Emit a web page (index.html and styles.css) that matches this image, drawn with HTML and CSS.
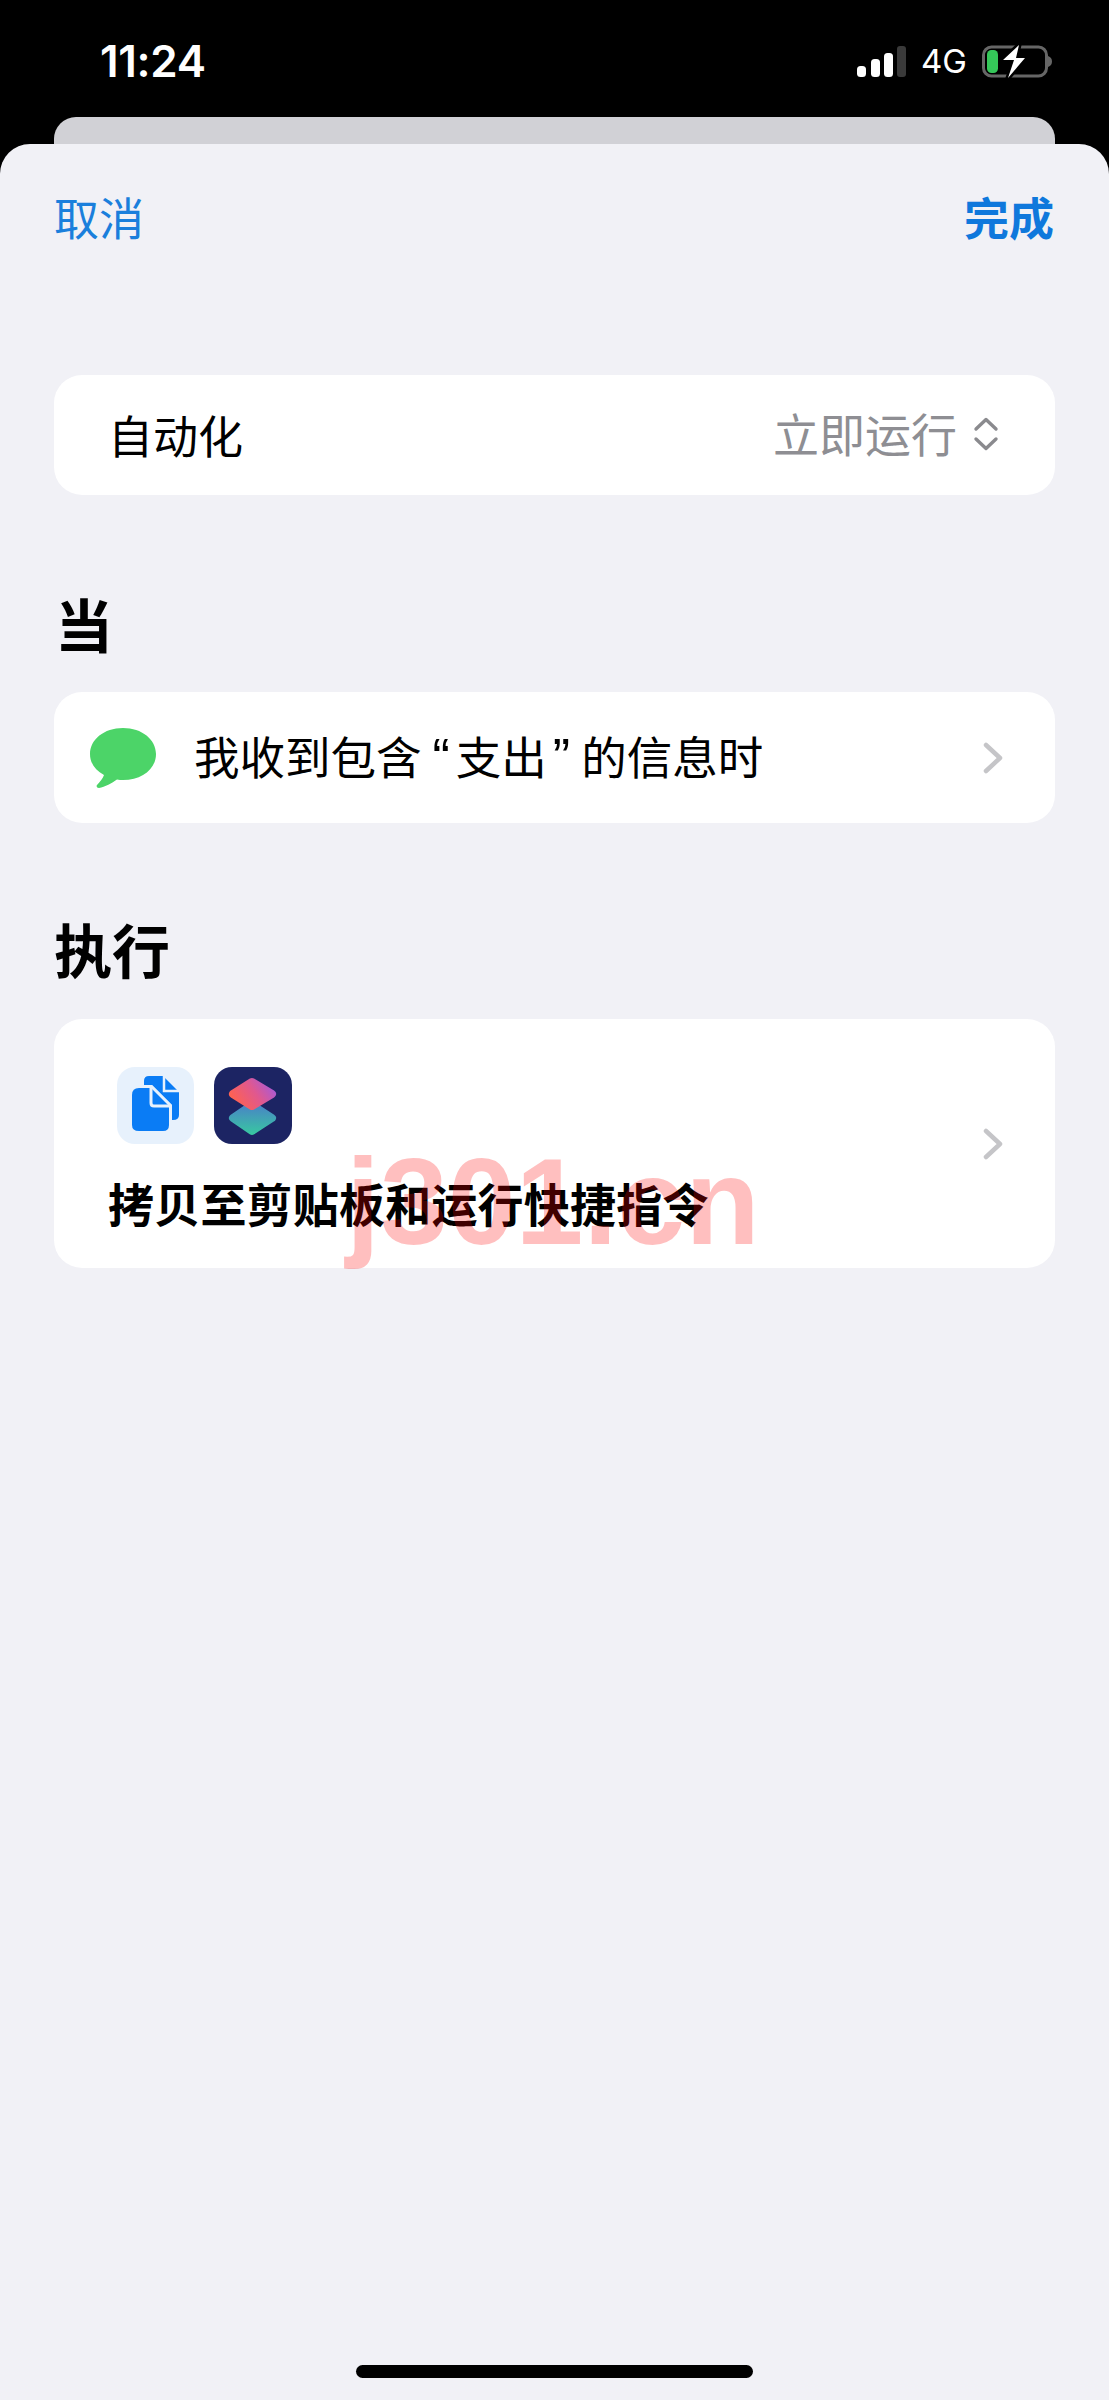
FILE: index.html
```html
<!DOCTYPE html>
<html lang="zh-CN">
<head>
    <meta charset="UTF-8">
    <meta name="viewport" content="width=device-width, initial-scale=1.0">
    <title>自动化</title>
    <link rel="stylesheet" href="styles.css">
</head>
<body>
    <div class="status-bar">
        <span class="time">11:24</span>
        <div class="status-icons">
            <svg class="signal" width="49" height="31" viewBox="0 0 49 31">
                <rect x="0" y="20" width="9" height="11" rx="3.5" fill="#fff"/>
                <rect x="14" y="13" width="9" height="18" rx="3.5" fill="#fff"/>
                <rect x="27" y="7" width="9" height="24" rx="3.5" fill="#fff"/>
                <rect x="40" y="0" width="9" height="31" rx="3" fill="#3a3a3a"/>
            </svg>
            <span class="network">4G</span>
            <svg class="battery" width="70" height="35" viewBox="0 0 70 35">
                <rect x="1.5" y="3" width="63" height="29" rx="8" fill="none" stroke="#666" stroke-width="3"/>
                <rect x="5" y="6" width="11" height="23" rx="4.5" fill="#35c759"/>
                <path d="M66 12 C69 13 70 15 70 17.5 C70 20 69 22 66 23 Z" fill="#666"/>
                <path d="M37 1 L21 16 L32 16 L26 34 L43 14 L34 14 Z" fill="#fff" stroke="#000" stroke-width="5" stroke-linejoin="round" paint-order="stroke"/>
            </svg>
        </div>
    </div>

    <div class="sheet-behind"></div>

    <div class="sheet">
        <div class="nav">
            <span class="nav-cancel">取消</span>
            <span class="nav-done">完成</span>
        </div>

        <div class="card card-mode">
            <span class="row-label">自动化</span>
            <span class="mode-value">立即运行</span>
            <svg class="updown" width="26" height="34" viewBox="0 0 26 34">
                <path d="M3 12 L13 2.5 L23 12 M3 22 L13 31.5 L23 22" fill="none" stroke="#8a8a8e" stroke-width="3.4" stroke-linecap="round" stroke-linejoin="round"/>
            </svg>
        </div>

        <h2 class="section-title title-when">当</h2>
        <div class="card card-trigger">
            <svg class="bubble" width="66" height="60" viewBox="0 0 66 60">
                <path d="M33 0 C52 0 66 11.5 66 26 C66 41 52 52 33 52 C31 52 29 52 27 51.5 C22 55 15 59 9 60 C7 60 6 58 7 57 C10 54 13 50 14 47 C5 42 0 35 0 26 C0 11.5 14 0 33 0 Z" fill="#4cd468"/>
            </svg>
            <span class="trigger-text">我收到包含<span class="quote quote-open">“</span>支出<span class="quote quote-close">”</span>的信息时</span>
            <svg class="chevron" width="20" height="32" viewBox="0 0 20 32">
                <path d="M3 3 L17 16 L3 29" fill="none" stroke="#c5c5c8" stroke-width="4.5" stroke-linecap="round" stroke-linejoin="round"/>
            </svg>
        </div>

        <h2 class="section-title title-do">执行</h2>
        <div class="card card-action">
            <div class="action-body">
                <div class="action-icons">
                    <div class="app-icon icon-copy">
                        <svg width="77" height="77" viewBox="0 0 77 77">
                            <path d="M32 9 H46 L62 25 V48 Q62 53 56 53 H32 Q27 53 27 48 V14 Q27 9 32 9 Z" fill="#0a7cf5"/>
                            <path d="M47 8 V24 H63" fill="none" stroke="#e7f1fc" stroke-width="2.5"/>
                            <path d="M22 21 H34 L52 39 V58 Q52 64 46 64 H22 Q15 64 15 58 V28 Q15 21 22 21 Z" fill="#0a7cf5" stroke="#e7f1fc" stroke-width="6" paint-order="stroke"/>
                            <path d="M34 20 V36 Q34 39 37 39 H53" fill="none" stroke="#e7f1fc" stroke-width="3"/>
                        </svg>
                    </div>
                    <div class="app-icon icon-shortcuts">
                        <svg width="78" height="77" viewBox="0 0 78 77">
                            <defs>
                                <linearGradient id="lowerDiamond" gradientUnits="userSpaceOnUse" x1="38" y1="36" x2="38" y2="68">
                                    <stop offset="0" stop-color="#4a7fc8"/>
                                    <stop offset="1" stop-color="#38c9a0"/>
                                </linearGradient>
                                <linearGradient id="upperDiamond" gradientUnits="userSpaceOnUse" x1="22" y1="38" x2="56" y2="14">
                                    <stop offset="0" stop-color="#ff6250"/>
                                    <stop offset="0.55" stop-color="#e0588f"/>
                                    <stop offset="1" stop-color="#a95ad6"/>
                                </linearGradient>
                            </defs>
                            <path d="M38 38 L58 51 L38 64 L19 51 Z" fill="url(#lowerDiamond)" stroke="url(#lowerDiamond)" stroke-width="8" stroke-linejoin="round"/>
                            <path d="M38 15 L58 27 L38 39 L19 27 Z" fill="url(#upperDiamond)" stroke="url(#upperDiamond)" stroke-width="8" stroke-linejoin="round"/>
                        </svg>
                    </div>
                </div>
                <div class="action-text">拷贝至剪贴板和运行快捷指令</div>
            </div>
            <svg class="chevron" width="20" height="32" viewBox="0 0 20 32">
                <path d="M3 3 L17 16 L3 29" fill="none" stroke="#c5c5c8" stroke-width="4.5" stroke-linecap="round" stroke-linejoin="round"/>
            </svg>
        </div>

        <div class="home-bar"></div>
    </div>

    <div class="watermark">j301.cn</div>
</body>
</html>
```

FILE: styles.css
```css
* {
    box-sizing: border-box;
}
html, body {
    margin: 0;
    padding: 0;
}
body {
    width: 1109px;
    height: 2400px;
    position: relative;
    overflow: hidden;
    background-color: #000;
    font-family: "Noto Sans CJK SC", "Liberation Sans", sans-serif;
    color: #000;
}

/* status bar */
.status-bar {
    height: 117px;
    padding: 36px 0 0 100px;
    display: flex;
    justify-content: space-between;
    align-items: flex-start;
    color: #fff;
}
.time {
    font-family: Inter, sans-serif;
    font-size: 44px;
    font-weight: 600;
    line-height: 50px;
    letter-spacing: -0.3px;
}
.status-icons {
    margin-right: 57px;
    margin-top: 7px;
    display: flex;
    align-items: center;
    gap: 15px;
}
.network {
    font-family: Inter, sans-serif;
    font-size: 33px;
    line-height: 36px;
    font-weight: 400;
}

/* sheets */
.sheet-behind {
    height: 40px;
    margin: 0 54px;
    background-color: #d1d1d6;
    border-radius: 22px 22px 0 0;
}
.sheet {
    height: 2256px;
    margin-top: -13px;
    position: relative;
    padding: 0 54px;
    background-color: #f1f1f6;
    border-radius: 30px 30px 0 0;
}
.nav {
    height: 96px;
    padding-top: 42px;
    display: flex;
    justify-content: space-between;
    font-size: 45px;
    line-height: 62px;
    color: #1a7fdc;
}
.nav-done {
    font-weight: 700;
    margin-right: 1px;
    color: #0f78dc;
}

/* cards */
.card {
    background-color: #fff;
    border-radius: 28px;
    display: flex;
    align-items: center;
}
.card-mode {
    height: 120px;
    margin-top: 135px;
    padding: 0 56px 0 54px;
}
.row-label {
    font-size: 45px;
    flex: 1;
    margin-top: -2px;
}
.mode-value {
    font-size: 46px;
    color: #8e8e93;
    margin-right: 16px;
    margin-top: -6px;
}
.updown {
    margin-top: -2px;
}
.section-title {
    margin: 0;
    font-size: 58px;
    font-weight: 700;
    line-height: 70px;
}
.title-when {
    margin-top: 93px;
    margin-left: 1px;
}
.title-do {
    margin-top: 90px;
}
.card-trigger {
    height: 131px;
    margin-top: 34px;
    padding: 0 52px 0 36px;
}
.bubble {
    margin-right: 38px;
    margin-top: 1px;
}
.trigger-text {
    flex: 1;
    font-size: 45.5px;
    margin-top: -5px;
}
/* quotes are narrower than the full width CJK ones */
.quote {
    font-family: "Liberation Sans", sans-serif;
    font-size: 52px;
    line-height: 1;
}
.quote-open {
    margin: 0 6px 0 11px;
}
.quote-close {
    margin: 0 11px 0 6px;
}
.card-action {
    height: 249px;
    margin-top: 36px;
    padding: 0 52px 0 54px;
}
.action-body {
    flex: 1;
    margin-top: 11px;
}
.action-icons {
    display: flex;
    gap: 20px;
    margin-left: 9px;
}
.app-icon {
    width: 77px;
    height: 77px;
    border-radius: 18px;
    overflow: hidden;
}
.icon-copy {
    background-color: #e7f1fc;
}
.icon-shortcuts {
    width: 78px;
    background-color: #1c2463;
}
.action-text {
    margin-top: 28px;
    font-size: 46px;
    font-weight: 700;
    line-height: 60px;
    letter-spacing: 0.2px;
}

/* home indicator */
.home-bar {
    position: absolute;
    left: 356px;
    bottom: 22px;
    width: 397px;
    height: 13px;
    background-color: #000;
    border-radius: 7px;
}

/* watermark sits over the card */
.watermark {
    position: absolute;
    left: 346px;
    top: 1132px;
    font-family: "Liberation Sans", Arial, sans-serif;
    font-size: 122px;
    font-weight: 700;
    line-height: 140px;
    color: rgba(255, 0, 0, 0.25);
}
```
